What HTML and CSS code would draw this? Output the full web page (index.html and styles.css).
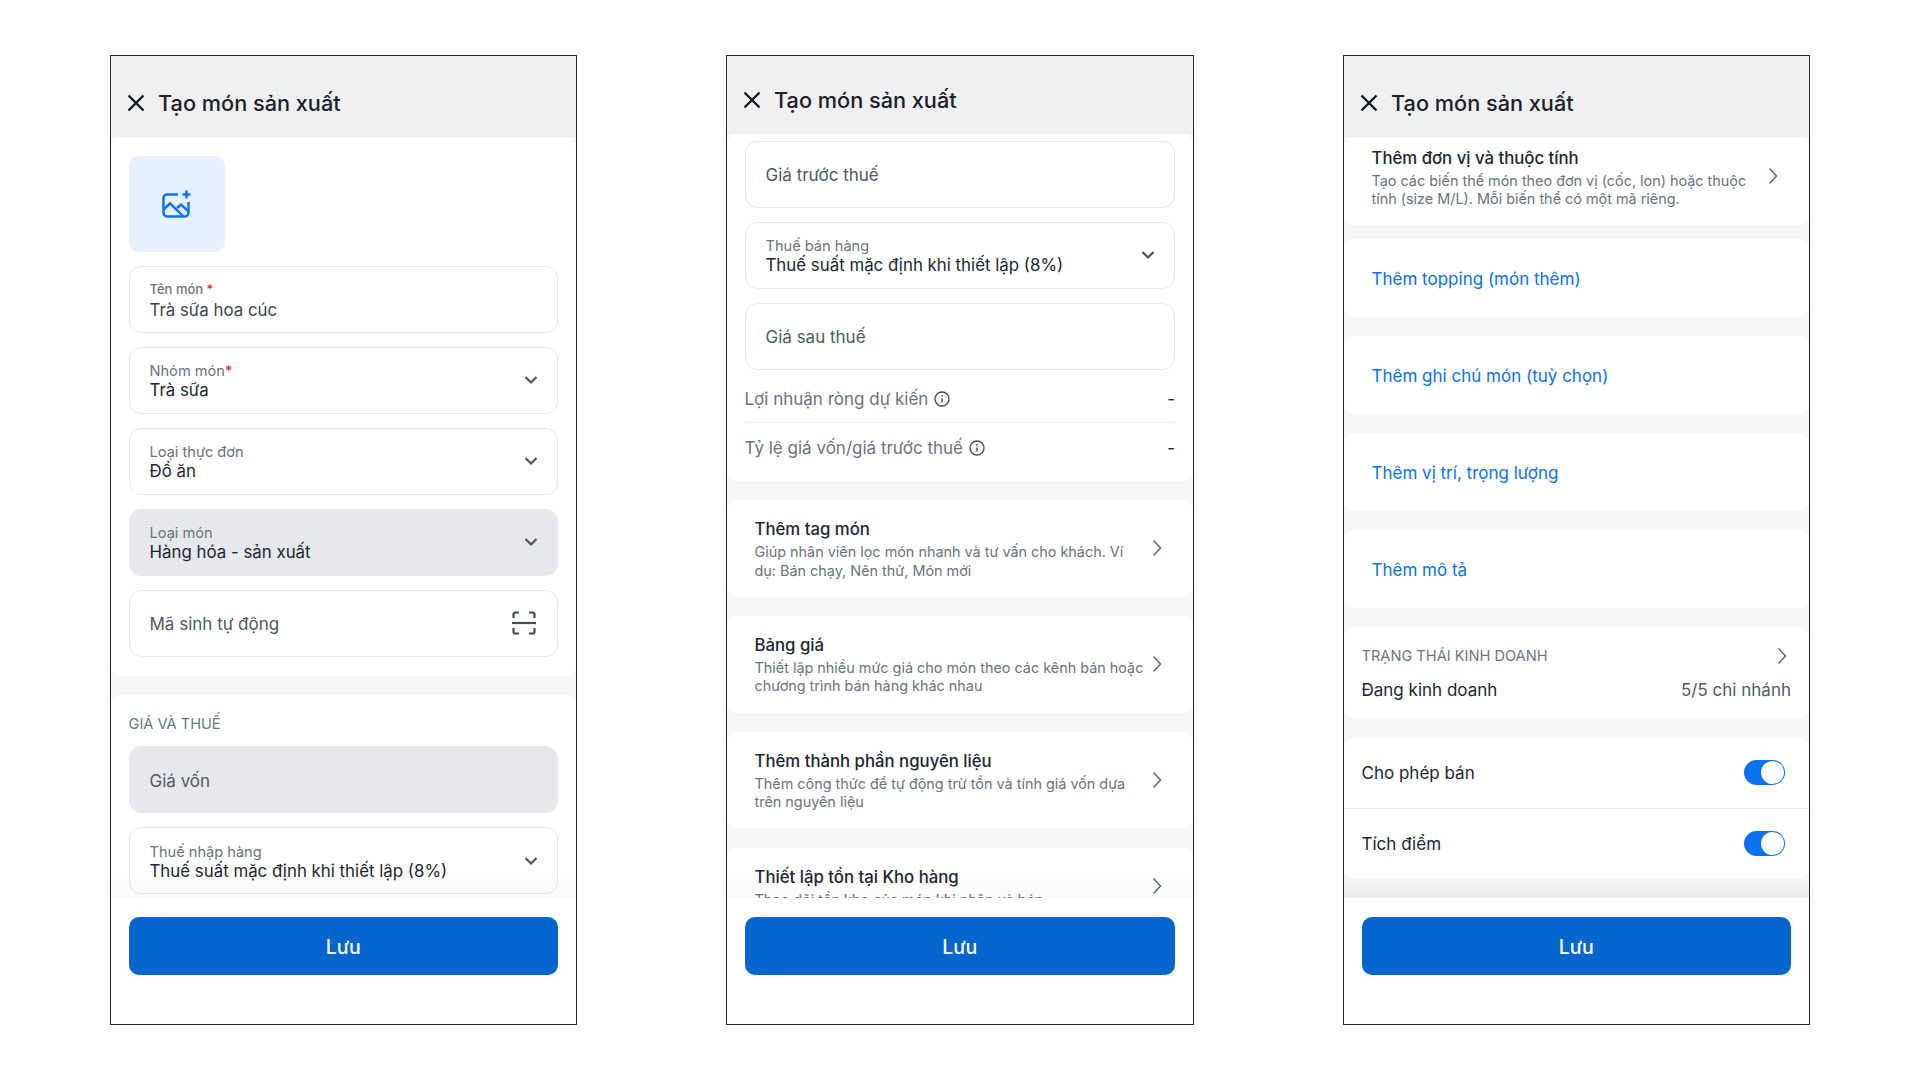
FILE: index.html
```html
<!DOCTYPE html>
<html>
	<head>
		<meta charset="utf-8">
		<title>Tạo món sản xuất</title>
		<link rel="stylesheet" href="styles.css">
	</head>
	<body>
		<svg class="sprite" width="0" height="0">
			<symbol id="i-close" viewBox="0 0 20 20"><path d="M2.500 2.500l15 15M17.500 2.500l-15 15" fill="none" stroke="currentColor" stroke-width="2.400"/></symbol>
			<symbol id="i-down" viewBox="0 0 14 10"><path d="M1.500 2l5.500 5.500L12.500 2" fill="none" stroke="currentColor" stroke-width="2.200"/></symbol>
			<symbol id="i-right" viewBox="0 0 10 18"><path d="M1.500 1.500L8.500 9l-7 7.500" fill="none" stroke="currentColor" stroke-width="1.500"/></symbol>
			<symbol id="i-info" viewBox="0 0 16 16"><circle cx="8" cy="8" r="7" fill="none" stroke="currentColor" stroke-width="1.300"/><path d="M8 7.200v4.300" fill="none" stroke="currentColor" stroke-width="1.400"/><circle cx="8" cy="4.800" r="0.900" fill="currentColor"/></symbol>
		</svg>

		<div class="phone">
			<div class="head"><svg class="close"><use href="#i-close"/></svg><span>Tạo món sản xuất</span></div>
			<div class="scroll">
				<div class="card card-form">
					<div class="tile">
						<svg width="30" height="28" viewBox="0 0 30 28" fill="none" stroke="#0a72ef" stroke-width="2.400">
							<path d="M16 4.500H5A3.500 3.500 0 0 0 1.500 8v15A3.500 3.500 0 0 0 5 26.500h18a3.500 3.500 0 0 0 3.500-3.500V12"/>
							<path d="M1.500 19.500L8 13.500l13 12.500M15 18l4-3.500 7.500 7"/>
							<path d="M24.500 0.500v8M20.500 4.500h8"/>
						</svg>
					</div>
					<div class="field">
						<div class="field-text"><div class="label label-small">Tên món <em>*</em></div><div class="value light">Trà sữa hoa cúc</div></div>
					</div>
					<div class="field">
						<div class="field-text"><div class="label">Nhóm món<em>*</em></div><div class="value">Trà sữa</div></div>
						<svg class="down"><use href="#i-down"/></svg>
					</div>
					<div class="field">
						<div class="field-text"><div class="label">Loại thực đơn</div><div class="value">Đồ ăn</div></div>
						<svg class="down"><use href="#i-down"/></svg>
					</div>
					<div class="field disabled">
						<div class="field-text"><div class="label">Loại món</div><div class="value">Hàng hóa - sản xuất</div></div>
						<svg class="down"><use href="#i-down"/></svg>
					</div>
					<div class="field">
						<div class="placeholder">Mã sinh tự động</div>
						<svg class="scan" width="24" height="24" viewBox="0 0 24 24" fill="none" stroke="#3f4a56" stroke-width="2.200">
							<path d="M1.500 7V3.500a2 2 0 0 1 2-2H7M17 1.500h3.500a2 2 0 0 1 2 2V7M1.500 17v3.500a2 2 0 0 0 2 2H7M17 22.500h3.500a2 2 0 0 0 2-2V17"/>
							<path d="M0 12h24"/>
						</svg>
					</div>
				</div>
				<div class="card card-form">
					<div class="section-title">GIÁ VÀ THUẾ</div>
					<div class="field disabled">
						<div class="placeholder">Giá vốn</div>
					</div>
					<div class="field">
						<div class="field-text"><div class="label">Thuế nhập hàng</div><div class="value">Thuế suất mặc định khi thiết lập (8%)</div></div>
						<svg class="down"><use href="#i-down"/></svg>
					</div>
				</div>
				<div class="fade"></div>
			</div>
			<div class="foot"><button class="save">Lưu</button></div>
		</div>

		<div class="phone phone-short">
			<div class="head"><svg class="close"><use href="#i-close"/></svg><span>Tạo món sản xuất</span></div>
			<div class="scroll">
				<div class="card card-price">
					<div class="field">
						<div class="placeholder">Giá trước thuế</div>
					</div>
					<div class="field">
						<div class="field-text"><div class="label">Thuế bán hàng</div><div class="value">Thuế suất mặc định khi thiết lập (8%)</div></div>
						<svg class="down"><use href="#i-down"/></svg>
					</div>
					<div class="field">
						<div class="placeholder">Giá sau thuế</div>
					</div>
					<div class="stats">
						<div class="stat stat-first"><span class="stat-name">Lợi nhuận ròng dự kiến <svg class="info"><use href="#i-info"/></svg></span><span>-</span></div>
						<div class="stat"><span class="stat-name">Tỷ lệ giá vốn/giá trước thuế <svg class="info"><use href="#i-info"/></svg></span><span>-</span></div>
					</div>
				</div>
				<div class="card action">
					<div class="action-text"><div class="action-title">Thêm tag món</div><div class="action-desc">Giúp nhân viên lọc món nhanh và tư vấn cho khách. Ví dụ: Bán chạy, Nên thử, Món mới</div></div>
					<svg class="right"><use href="#i-right"/></svg>
				</div>
				<div class="card action">
					<div class="action-text"><div class="action-title">Bảng giá</div><div class="action-desc">Thiết lập nhiều mức giá cho món theo các kênh bán hoặc chương trình bán hàng khác nhau</div></div>
					<svg class="right"><use href="#i-right"/></svg>
				</div>
				<div class="card action">
					<div class="action-text"><div class="action-title">Thêm thành phần nguyên liệu</div><div class="action-desc">Thêm công thức để tự động trừ tồn và tính giá vốn dựa trên nguyên liệu</div></div>
					<svg class="right"><use href="#i-right"/></svg>
				</div>
				<div class="card action">
					<div class="action-text"><div class="action-title">Thiết lập tồn tại Kho hàng</div><div class="action-desc">Theo dõi tồn kho của món khi nhập và bán</div></div>
					<svg class="right"><use href="#i-right"/></svg>
				</div>
				<div class="fade"></div>
			</div>
			<div class="foot"><button class="save">Lưu</button></div>
		</div>

		<div class="phone">
			<div class="head"><svg class="close"><use href="#i-close"/></svg><span>Tạo món sản xuất</span></div>
			<div class="scroll">
				<div class="card action action-cut">
					<div class="action-text"><div class="action-title">Thêm đơn vị và thuộc tính</div><div class="action-desc">Tạo các biến thể món theo đơn vị (cốc, lon) hoặc thuộc tính (size M/L). Mỗi biến thể có một mã riêng.</div></div>
					<svg class="right"><use href="#i-right"/></svg>
				</div>
				<div class="card link link-first">Thêm topping (món thêm)</div>
				<div class="card link">Thêm ghi chú món (tuỳ chọn)</div>
				<div class="card link">Thêm vị trí, trọng lượng</div>
				<div class="card link">Thêm mô tả</div>
				<div class="card status">
					<div class="status-head"><span>TRẠNG THÁI KINH DOANH</span><svg class="right"><use href="#i-right"/></svg></div>
					<div class="status-row"><span>Đang kinh doanh</span><span class="status-count">5/5 chi nhánh</span></div>
				</div>
				<div class="card">
					<div class="switch-row"><span>Cho phép bán</span><div class="switch"></div></div>
					<div class="switch-row"><span>Tích điểm</span><div class="switch"></div></div>
				</div>
				<div class="fade fade-strong"></div>
			</div>
			<div class="foot"><button class="save">Lưu</button></div>
		</div>
	</body>
</html>
```

FILE: styles.css
```css
* {
	box-sizing: border-box;
}

body {
	margin: 0;
	height: 1080px;
	padding: 55px 110px 0;
	display: flex;
	justify-content: space-between;
	align-items: flex-start;
	background-color: white;
	font-family: Inter, "Noto Sans", sans-serif;
	color: #1c2530;
}

.sprite {
	display: block;
	position: absolute;
}

.phone {
	width: 467px;
	height: 970px;
	border: 1.5px solid #23272b;
	display: flex;
	flex-direction: column;
	background-color: white;
}

.phone-short {
	width: 468px;
}

.head {
	height: 80.5px;
	flex: none;
	padding: 12.5px 0 0 15px;
	background-color: #eff0f2;
	display: flex;
	align-items: center;
	gap: 12px;
	font-size: 21.7px;
	font-weight: 500;
	color: #1c2127;
}

.phone-short .head {
	height: 77.5px;
	padding-top: 9.5px;
}

.close {
	width: 20px;
	height: 20px;
	color: #15191e;
}

.scroll {
	flex: 1;
	min-height: 0;
	overflow: hidden;
	position: relative;
	background-color: #f6f7f9;
	display: flex;
	flex-direction: column;
	gap: 19.4px;
}

.card {
	flex: none;
	background-color: white;
	border-radius: 10px;
}

.card-form {
	padding: 19px 18px 19px 17.500px;
	display: flex;
	flex-direction: column;
	gap: 14.5px;
}

.tile {
	width: 96px;
	height: 96px;
	border-radius: 10px;
	background-color: #e5f1ff;
	display: flex;
	align-items: center;
	justify-content: center;
}

.field {
	height: 66.5px;
	flex: none;
	padding: 0 19px 0 20px;
	border: 1.5px solid #e6e8eb;
	border-radius: 12px;
	display: flex;
	align-items: center;
	justify-content: space-between;
	background-color: white;
}

.field.disabled {
	background-color: #e6e8ec;
	border-color: #e6e8ec;
}

.field-text {
	min-width: 0;
	padding-top: 3px;
}

.label {
	font-size: 14.6px;
	line-height: 18px;
	color: #6a737d;
}

.label-small {
	font-size: 13px;
	font-weight: 500;
	margin-bottom: 2px;
}

.label em {
	font-style: normal;
	color: #f0232d;
}

.value {
	font-size: 16.85px;
	line-height: 21px;
}

.value.light {
	color: #3a444f;
}

.placeholder {
	padding-top: 2px;
	font-size: 17px;
	color: #4f5965;
}

.down {
	width: 14px;
	height: 10px;
	color: #4b5663;
}

.scan {
	margin-right: 2px;
}

.section-title {
	margin: 1px 0 -1px;
	font-size: 14.6px;
	line-height: 18px;
	color: #6a7683;
}

.card-price {
	padding: 7.500px 18px 8px 17.500px;
	display: flex;
	flex-direction: column;
	gap: 14.5px;
}

.stats {
	margin-top: -8px;
}

.stat {
	height: 50px;
	display: flex;
	align-items: center;
	justify-content: space-between;
	font-size: 17px;
}

.stat-first {
	height: 47px;
	border-bottom: 1px solid #e9ebee;
}

.stat-name {
	display: flex;
	align-items: center;
	gap: 6px;
	color: #6a737d;
}

.info {
	width: 16px;
	height: 16px;
	color: #3f4a56;
}

.action {
	padding: 16px 31px 17px 27.500px;
	display: flex;
	align-items: center;
	justify-content: space-between;
}

.action-text {
	width: 390px;
}

.action-title {
	font-size: 16.75px;
	line-height: 26px;
	font-weight: 500;
}

.action-desc {
	margin-top: 1px;
	font-size: 14.4px;
	line-height: 18.2px;
	color: #6a737d;
}

.right {
	width: 10px;
	height: 18px;
	flex: none;
	color: #5d6771;
}

.action-cut {
	padding-top: 8px;
	margin-bottom: -5px;
}

.link {
	height: 77.6px;
	flex: none;
	padding: 2px 0 0 27.500px;
	display: flex;
	align-items: center;
	font-size: 17px;
	color: #0a72ef;
}

.status {
	height: 91px;
	padding: 20px 18px 0 17.500px;
}

.status-head {
	height: 18px;
	padding-right: 4px;
	display: flex;
	align-items: center;
	justify-content: space-between;
	font-size: 14.6px;
	color: #6a7683;
}

.status-row {
	margin-top: 12px;
	display: flex;
	justify-content: space-between;
	font-size: 17px;
	line-height: 26px;
}

.status-count {
	color: #4f5965;
}

.switch-row {
	height: 70.500px;
	padding: 0 24px 0 17.500px;
	display: flex;
	align-items: center;
	justify-content: space-between;
	font-size: 17px;
}

.switch-row + .switch-row {
	border-top: 1.500px solid #e9ebee;
}

.switch {
	width: 41px;
	height: 25px;
	border-radius: 13px;
	background-color: #0a72ef;
	position: relative;
}

.switch::after {
	content: "";
	position: absolute;
	top: 1px;
	right: 1px;
	width: 23px;
	height: 23px;
	border-radius: 50%;
	background-color: white;
}

.fade {
	position: absolute;
	left: 0;
	right: 0;
	bottom: 0;
	height: 26px;
	background: linear-gradient(rgba(0, 0, 0, 0), rgba(0, 0, 0, 0.025));
}

.fade-strong {
	background: linear-gradient(rgba(0, 0, 0, 0), rgba(0, 0, 0, 0.045));
}

.foot {
	height: 126px;
	flex: none;
	padding: 19px 18px 0 17.500px;
	background-color: white;
}

.save {
	width: 100%;
	height: 58px;
	padding-top: 2px;
	border: none;
	border-radius: 10px;
	background-color: #0366cc;
	color: white;
	font-family: inherit;
	font-size: 19.5px;
	font-weight: 500;
}
```
